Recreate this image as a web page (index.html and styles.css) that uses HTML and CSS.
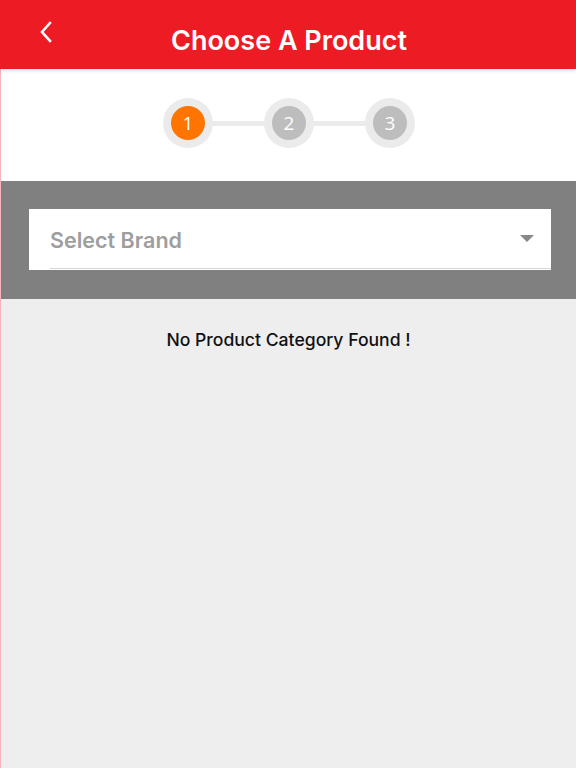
FILE: index.html
```html
<!DOCTYPE html>
<html>
<head>
<meta charset="utf-8">
<link rel="stylesheet" href="styles.css">
</head>
<body>
<div class="app">
  <header class="topbar">
    <button class="back" aria-label="Back">
      <svg width="14" height="22" viewBox="0 0 14 22"><path d="M11 2 L3 11 L11 20" fill="none" stroke="#fff" stroke-width="2.6" stroke-linecap="square"/></svg>
    </button>
    <h1 class="title">Choose A Product</h1>
  </header>
  <main class="content">
    <section class="stepper">
      <div class="step active"><span class="dot">1</span></div>
      <div class="line"></div>
      <div class="step"><span class="dot">2</span></div>
      <div class="line"></div>
      <div class="step"><span class="dot">3</span></div>
    </section>
    <section class="filter">
      <div class="select">
        <span class="placeholder">Select Brand</span>
        <span class="caret"></span>
      </div>
    </section>
    <section class="results">
      <p class="empty">No Product Category Found !</p>
    </section>
  </main>
</div>
</body>
</html>
```
FILE: styles.css
```css
* { box-sizing: border-box; }
html, body { margin: 0; padding: 0; height: 100%; }
body { font-family: Inter, "Noto Sans", sans-serif; background: #eeeeee; }
.app { display: flex; flex-direction: column; min-height: 768px; }
.topbar {
  height: 69px; background: #ed1c24; position: relative;
  display: flex; align-items: center; justify-content: center;
  box-shadow: 0 2px 4px rgba(0,0,0,0.12); z-index: 2;
}
.back {
  position: absolute; left: 36px; top: 20px; background: none; border: 0; padding: 0;
  width: 20px; height: 24px; display: flex; align-items: center; justify-content: center;
}
.title {
  margin: 12px 0 0 2px; color: #fff; font-size: 27px; font-weight: 600; letter-spacing: 0;
}
.content { flex: 1; display: flex; flex-direction: column; border-left: 1px solid #f4b6b8; }
.stepper {
  background: #fff; height: 112px; display: flex; align-items: center; justify-content: center;
  padding: 0 0 4px 1px;
}
.step {
  width: 50px; height: 50px; border-radius: 50%; background: #ebebeb;
  display: flex; align-items: center; justify-content: center; flex: none;
}
.dot {
  width: 34px; height: 34px; border-radius: 50%; background: #bdbdbd; color: #fff;
  display: flex; align-items: center; justify-content: center;
  font-family: "Open Sans", sans-serif; font-size: 19px; font-weight: 400;
}
.step.active .dot { background: #ff7500; }
.line { width: 53px; height: 5px; background: #ebebeb; margin: 0 -1px; }
.filter { background: #808080; height: 118px; padding: 28px 25px 0 28px; }
.select {
  background: #fff; height: 61px; display: flex; align-items: center;
  padding: 0 17px 0 21px; position: relative;
}
.select::after {
  content: ""; position: absolute; left: 21px; right: 0; bottom: 1px; height: 1px; background: #d6d6d6;
}
.placeholder { flex: 1; color: #9e9e9e; font-size: 21.5px; font-weight: 600; margin-top: 0; }
.caret {
  width: 0; height: 0; border-left: 7px solid transparent; border-right: 7px solid transparent;
  border-top: 7px solid #888; margin-top: -2px;
}
.results { flex: 1; background: #eeeeee; }
.empty { margin: 30px 0 0; text-align: center; font-size: 17.6px; font-weight: 500; color: #111; }
```
